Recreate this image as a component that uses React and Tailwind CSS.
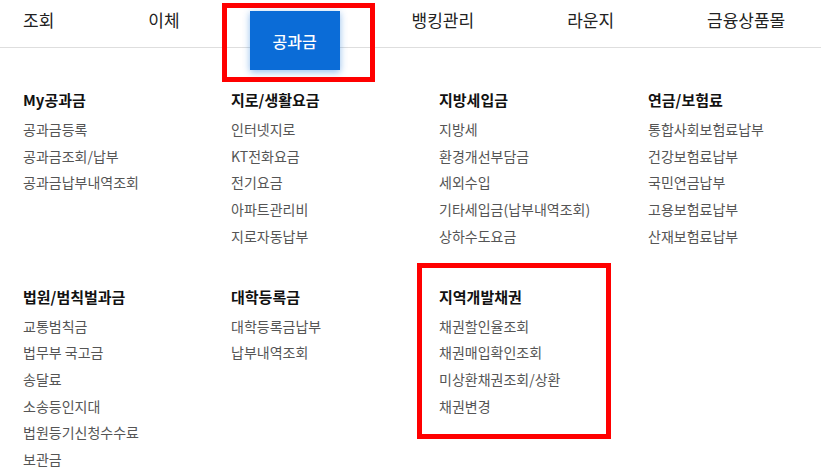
import React from 'react'

const font = { fontFamily: '"Noto Sans CJK KR", "Noto Sans", sans-serif' }

const groups = [
  { title: 'My공과금', items: ['공과금등록', '공과금조회/납부', '공과금납부내역조회'] },
  { title: '지로/생활요금', items: ['인터넷지로', 'KT전화요금', '전기요금', '아파트관리비', '지로자동납부'] },
  { title: '지방세입금', items: ['지방세', '환경개선부담금', '세외수입', '기타세입금(납부내역조회)', '상하수도요금'] },
  { title: '연금/보험료', items: ['통합사회보험료납부', '건강보험료납부', '국민연금납부', '고용보험료납부', '산재보험료납부'] },
  { title: '법원/범칙벌과금', items: ['교통범칙금', '법무부 국고금', '송달료', '소송등인지대', '법원등기신청수수료', '보관금'] },
  { title: '대학등록금', items: ['대학등록금납부', '납부내역조회'] },
  { title: '지역개발채권', items: ['채권할인율조회', '채권매입확인조회', '미상환채권조회/상환', '채권변경'] },
]

function Group({ title, items }) {
  return (
    <div>
      <div className="text-[15px] font-bold leading-[27px] text-[#111]">{title}</div>
      <ul className="mt-[3px]">
        {items.map((it) => (
          <li key={it} className="text-[14px] leading-[26.7px] text-[#555]">
            {it}
          </li>
        ))}
      </ul>
    </div>
  )
}

export default function App() {
  return (
    <div className="relative w-[821px] h-[474px] overflow-hidden bg-white" style={font}>
      {/* top menu */}
      <nav className="flex h-[48px] items-start border-b border-[#dedede] text-[17px] leading-[24px] text-[#222]">
        <span className="ml-[23px] mt-[8px]">조회</span>
        <span className="ml-[94px] mt-[8px]">이체</span>
        <span className="relative z-10 ml-[70px] mt-[11px] flex h-[59px] w-[90px] items-center justify-center bg-[#0b6cd7] text-[16px] font-medium text-white shadow-[0_2px_7px_rgba(11,108,215,0.45)]">
          공과금
        </span>
        <span className="ml-[72px] mt-[8px]">뱅킹관리</span>
        <span className="ml-[93px] mt-[8px]">라운지</span>
        <span className="ml-[93px] mt-[8px]">금융상품몰</span>
      </nav>

      {/* submenu */}
      <div className="grid grid-cols-[208px_208px_209px_1fr] gap-y-[33px] pl-[23px] pt-[38px]">
        {groups.map((g) => (
          <Group key={g.title} {...g} />
        ))}
      </div>

      {/* annotation boxes */}
      <div className="pointer-events-none absolute left-[222px] top-[3px] h-[79px] w-[153px] border-[5px] border-[#ff0000]" />
      <div className="pointer-events-none absolute left-[417px] top-[263px] h-[176px] w-[194px] border-[5px] border-[#ff0000]" />
    </div>
  )
}
